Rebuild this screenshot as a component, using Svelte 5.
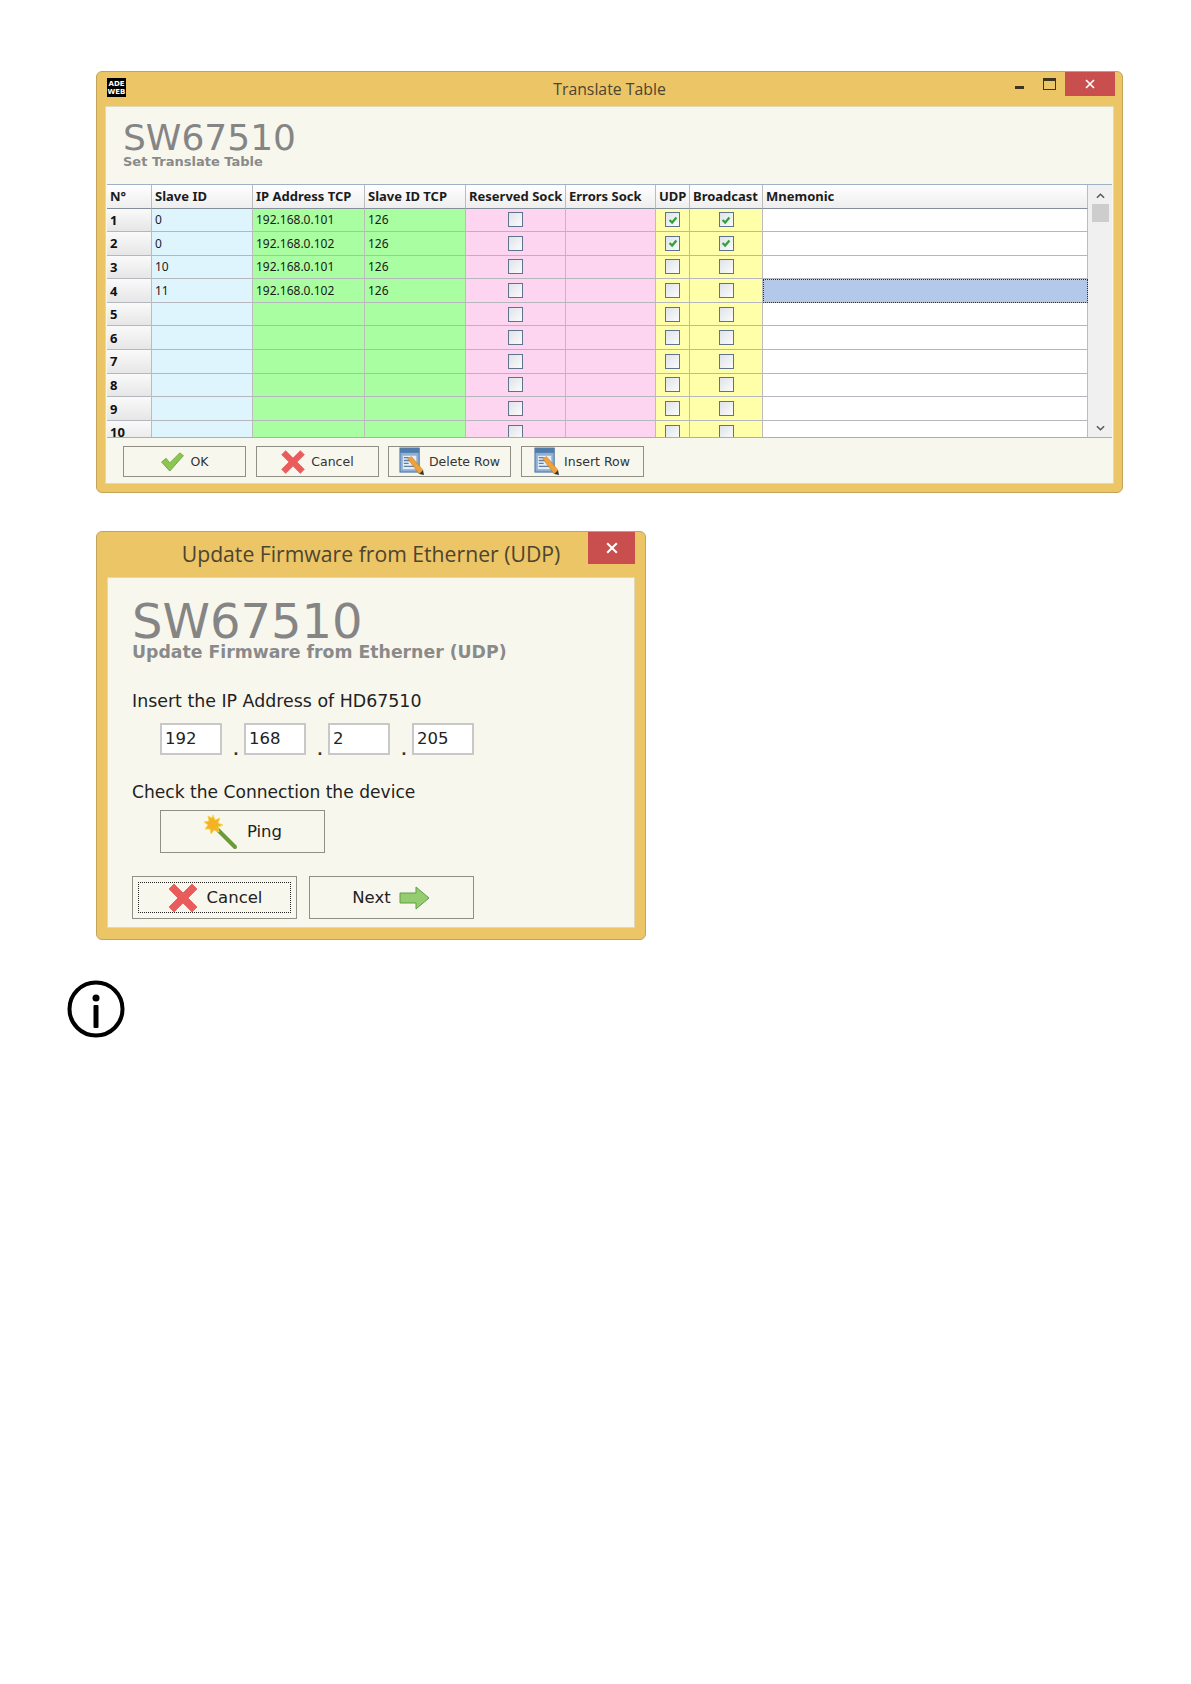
<script>
  const columns = [
    { label: "N°", cls: "num" },
    { label: "Slave ID", cls: "blue" },
    { label: "IP Address TCP", cls: "green" },
    { label: "Slave ID TCP", cls: "green" },
    { label: "Reserved Sock", cls: "pink" },
    { label: "Errors Sock", cls: "pink" },
    { label: "UDP", cls: "yellow" },
    { label: "Broadcast", cls: "yellow" },
    { label: "Mnemonic", cls: "white" },
  ];

  const rows = [
    { slave: "0", ip: "192.168.0.101", tcp: "126", udp: true, broadcast: true },
    { slave: "0", ip: "192.168.0.102", tcp: "126", udp: true, broadcast: true },
    { slave: "10", ip: "192.168.0.101", tcp: "126" },
    { slave: "11", ip: "192.168.0.102", tcp: "126", selected: true },
    {},
    {},
    {},
    {},
    {},
    {},
  ];

  const octets = ["192", "168", "2", "205"];
</script>

{#snippet checkbox(checked)}
  <span class="check">
    {#if checked}
      <svg viewBox="0 0 14 14" width="12" height="12">
        <path d="M3 7l3 3 5-6" fill="none" stroke="#2fa33a" stroke-width="2.6" />
      </svg>
    {/if}
  </span>
{/snippet}

{#snippet redX(size)}
  <svg viewBox="0 0 32 32" width={size} height={size}>
    <path
      d="M7 2l9 9 9-9 5 5-9 9 9 9-5 5-9-9-9 9-5-5 9-9-9-9z"
      fill="#ea5c5c"
      stroke="#e46a66"
      stroke-width="1"
      stroke-linejoin="round"
    />
  </svg>
{/snippet}

{#snippet docPencil()}
  <svg viewBox="0 0 26 30" width="25" height="29">
    <rect x="1" y="1" width="20" height="25" fill="#8fb0d4" stroke="#46709e" />
    <rect x="1" y="1" width="20" height="5" fill="#4f7cab" />
    <rect x="4" y="9" width="14" height="14" fill="#e6edf5" />
    <path d="M5 11h5M5 14h11M5 17h5M5 20h11" stroke="#5b7fa6" stroke-width="1.4" />
    <path d="M9 12l4-2 12 14-4 4z" fill="#efa23c" stroke="#c67a1c" stroke-width="0.6" />
    <path d="M21 28l4-4 1 5z" fill="#333" />
  </svg>
{/snippet}

<main class="page">
  <section class="window wide">
    <header class="titlebar">
      <div class="logo"><span>ADE</span><span>WEB</span></div>
      <div class="title">Translate Table</div>
      <div class="controls">
        <span class="min"></span>
        <span class="max"></span>
        <span class="close">
          <svg viewBox="0 0 10 10" width="10" height="10">
            <path d="M1 1l8 8M9 1l-8 8" stroke="#fff" stroke-width="1.7" />
          </svg>
        </span>
      </div>
    </header>

    <div class="body">
      <div class="brand">
        <div class="code">SW67510</div>
        <div class="sub">Set Translate Table</div>
      </div>

      <div class="table-wrap">
        <div class="table">
          <div class="row head">
            {#each columns as col}
              <div class="cell">{col.label}</div>
            {/each}
          </div>
          {#each rows as row, i}
            <div class="row">
              <div class="cell num">{i + 1}</div>
              <div class="cell blue">{row.slave ?? ""}</div>
              <div class="cell green">{row.ip ?? ""}</div>
              <div class="cell green">{row.tcp ?? ""}</div>
              <div class="cell pink center">{@render checkbox(false)}</div>
              <div class="cell pink"></div>
              <div class="cell yellow center">{@render checkbox(row.udp)}</div>
              <div class="cell yellow center">{@render checkbox(row.broadcast)}</div>
              <div class="cell white" class:selected={row.selected}></div>
            </div>
          {/each}
        </div>
        <div class="scrollbar">
          <svg viewBox="0 0 10 6" width="9" height="6">
            <path d="M1 5l4-4 4 4" fill="none" stroke="#555" stroke-width="1.6" />
          </svg>
          <div class="thumb"></div>
          <svg class="down" viewBox="0 0 10 6" width="9" height="6">
            <path d="M1 1l4 4 4-4" fill="none" stroke="#555" stroke-width="1.6" />
          </svg>
        </div>
      </div>

      <div class="actions">
        <button class="btn">
          <svg viewBox="0 0 26 22" width="25" height="20">
            <path
              d="M1 11l5-4 4 5L21 1l4 3L10 21z"
              fill="#8cc552"
              stroke="#6ea53a"
              stroke-linejoin="round"
            />
          </svg>
          OK
        </button>
        <button class="btn">{@render redX(26)} Cancel</button>
        <button class="btn">{@render docPencil()} Delete Row</button>
        <button class="btn">{@render docPencil()} Insert Row</button>
      </div>
    </div>
  </section>

  <section class="window small">
    <header class="titlebar big">
      <div class="title">Update Firmware from Etherner (UDP)</div>
      <span class="close">
        <svg viewBox="0 0 10 10" width="12" height="12">
          <path d="M1 1l8 8M9 1l-8 8" stroke="#fff" stroke-width="1.7" />
        </svg>
      </span>
    </header>

    <div class="body">
      <div class="brand">
        <div class="code">SW67510</div>
        <div class="sub">Update Firmware from Etherner (UDP)</div>
      </div>

      <p class="label first">Insert the IP Address of HD67510</p>
      <div class="ip">
        {#each octets as octet, i}
          {#if i > 0}<span class="dot">.</span>{/if}
          <span class="octet">{octet}</span>
        {/each}
      </div>

      <p class="label second">Check the Connection the device</p>
      <button class="btn large ping">
        <svg viewBox="0 0 36 36" width="36" height="36">
          <path d="M12 13l20 20" stroke="#6c9a3a" stroke-width="4" stroke-linecap="round" />
          <path
            d="M10 1l2 5 5-2-2 5 5 2-5 2 1 5-5-2-3 4-1-5-5 0 3-4-4-3 5-1-1-5 4 2z"
            fill="#f4b326"
            stroke="#f6d548"
            stroke-width="0.8"
          />
        </svg>
        Ping
      </button>

      <div class="nav">
        <button class="btn large focused">
          <span class="focus"></span>
          {@render redX(32)} Cancel
        </button>
        <button class="btn large">
          Next
          <svg viewBox="0 0 32 24" width="32" height="24">
            <path
              d="M1 7h16V1l13 11-13 11v-6H1z"
              fill="#96cc70"
              stroke="#5f9e48"
              stroke-linejoin="round"
            />
          </svg>
        </button>
      </div>
    </div>
  </section>

  <svg class="info" viewBox="0 0 58 58" width="58" height="58">
    <circle cx="29" cy="29" r="26.5" fill="none" stroke="#000" stroke-width="4" />
    <circle cx="29" cy="18" r="3.5" fill="#000" />
    <rect x="26.5" y="25" width="5" height="23" rx="1" fill="#000" />
  </svg>
</main>

<style>
  :global(body) {
    background: #fff;
  }

  .page {
    height: 1684px;
    padding: 71px 0 0 96px;
    box-sizing: border-box;
    display: flex;
    flex-direction: column;
    align-items: flex-start;
    font-family: "DejaVu Sans", sans-serif;
  }

  .window {
    box-sizing: border-box;
    background: #ecc566;
    border: 1px solid #c4a45c;
    border-radius: 6px;
    display: flex;
    flex-direction: column;
  }

  .wide {
    width: 1027px;
    height: 422px;
    padding: 0 8px 8px;
  }

  .small {
    width: 550px;
    height: 409px;
    margin-top: 38px;
    padding: 0 10px 11px;
  }

  .titlebar {
    height: 34px;
    flex: none;
    display: flex;
    align-items: center;
    justify-content: center;
    position: relative;
  }

  .titlebar.big {
    height: 45px;
  }

  .title {
    font-family: "Open Sans", sans-serif;
    font-size: 15.8px;
    color: #4d4430;
    margin-bottom: 1px;
  }

  .big .title {
    font-size: 21.2px;
    margin-bottom: 2px;
  }

  .logo {
    position: absolute;
    left: 2px;
    top: 6px;
    width: 19px;
    height: 19px;
    background: #000;
    color: #fff;
    font-size: 7px;
    font-weight: 700;
    line-height: 8px;
    display: flex;
    flex-direction: column;
    align-items: center;
    justify-content: center;
    overflow: hidden;
  }

  .controls {
    position: absolute;
    right: -1px;
    top: 0;
    display: flex;
    align-items: flex-start;
  }

  .min {
    width: 9px;
    height: 3px;
    background: #3d3520;
    margin: 14px 19px 0 0;
  }

  .max {
    width: 11px;
    height: 8px;
    border: 1px solid #3d3520;
    border-top-width: 3px;
    margin: 6px 9px 0 0;
  }

  .close {
    width: 50px;
    height: 24px;
    background: #c94f4f;
    display: flex;
    align-items: center;
    justify-content: center;
  }

  .big .close {
    position: absolute;
    right: 0;
    top: 0;
    width: 47px;
    height: 32px;
  }

  .body {
    flex: 1;
    min-height: 0;
    background: #f8f7ee;
    border: 1px solid #e0d9b5;
    display: flex;
    flex-direction: column;
  }

  .brand {
    color: #858585;
  }

  .code {
    font-size: 36px;
    line-height: 36px;
    padding-top: 13px;
    padding-left: 17px;
  }

  .sub {
    font-size: 13px;
    font-weight: 700;
    line-height: 14px;
    margin-top: -1px;
    padding-left: 17px;
    color: #8a8a8a;
  }

  .table-wrap {
    margin: 15px 1px 0 1px;
    height: 254px;
    flex: none;
    display: flex;
    border-top: 1px solid #9fb2c4;
    border-bottom: 1px solid #9fb2c4;
    box-sizing: border-box;
  }

  .table {
    width: 981px;
    overflow: hidden;
    font-family: "Noto Sans", sans-serif;
  }

  .row {
    display: grid;
    grid-template-columns: 45px 101px 112px 101px 100px 90px 34px 73px 325px;
    height: 23.6px;
  }

  .cell {
    box-sizing: border-box;
    border-right: 1px solid #bcbcbc;
    border-bottom: 1px solid #b4b8bc;
    padding-left: 3px;
    font-size: 12px;
    color: #1a1a1a;
    display: flex;
    align-items: center;
    overflow: hidden;
    white-space: nowrap;
  }

  .head {
    height: 23.5px;
  }

  .head .cell {
    background: linear-gradient(#fff, #eee);
    border-bottom-color: #858f99;
    font-size: 13px;
    font-weight: 700;
    color: #1c1c1c;
  }

  .cell.num {
    background: linear-gradient(#fafafa, #e6e6e6);
    font-size: 13px;
    font-weight: 700;
    color: #111;
  }

  .blue {
    background: #dff5fe;
  }
  .green {
    background: #a9fea1;
  }
  .pink {
    background: #fdd5f1;
  }
  .yellow {
    background: #ffffaa;
  }
  .white {
    background: #fff;
  }

  .center {
    justify-content: center;
    padding-left: 0;
  }

  .cell.selected {
    background: #b4c8e9;
    outline: 1px dotted #333;
    outline-offset: -1px;
  }

  .check {
    box-sizing: border-box;
    width: 15px;
    height: 15px;
    flex: none;
    border: 1.5px solid #5f748c;
    background: linear-gradient(135deg, #dfe3e8, #fbfbfb);
    display: flex;
    align-items: center;
    justify-content: center;
  }

  .scrollbar {
    width: 24px;
    background: #f0f0f0;
    display: flex;
    flex-direction: column;
    align-items: center;
    padding-top: 8px;
    box-sizing: border-box;
  }

  .thumb {
    width: 17px;
    height: 18px;
    margin-top: 5px;
    background: #cdcdcd;
  }

  .down {
    margin-top: auto;
    margin-bottom: 6px;
  }

  .actions {
    display: flex;
    gap: 9.5px;
    padding: 8px 0 0 17px;
  }

  .btn {
    box-sizing: border-box;
    width: 123px;
    height: 31px;
    padding: 0;
    background: #f8f7ee;
    border: 1px solid #8f8f85;
    font-family: "DejaVu Sans", sans-serif;
    font-size: 12.5px;
    color: #333;
    display: flex;
    align-items: center;
    justify-content: center;
    gap: 5px;
    position: relative;
  }

  .small .brand .code {
    font-size: 48px;
    line-height: 48px;
    padding-top: 19px;
    padding-left: 24px;
  }

  .small .sub {
    font-size: 17.3px;
    line-height: 18px;
    margin-top: -2px;
    padding-left: 24px;
  }

  .label {
    margin: 0;
    padding-left: 24px;
    font-size: 17.4px;
    line-height: 20px;
    color: #222;
  }

  .first {
    margin-top: 29.5px;
  }

  .second {
    margin-top: 27px;
    font-size: 17.1px;
  }

  .ip {
    display: flex;
    padding-left: 52px;
    margin-top: 12.5px;
  }

  .octet {
    box-sizing: border-box;
    width: 62px;
    height: 32px;
    background: #fff;
    border: 2px solid #c8c8c8;
    padding-left: 3px;
    font-size: 16.5px;
    line-height: 28px;
    color: #222;
  }

  .dot {
    box-sizing: border-box;
    width: 22px;
    padding-left: 6px;
    text-align: center;
    font-size: 14px;
    font-weight: 700;
    line-height: 54px;
    height: 32px;
    color: #333;
  }

  .btn.large {
    width: 165px;
    height: 43px;
    font-size: 16.5px;
    color: #222;
    gap: 8px;
  }

  .ping {
    margin: 8px 0 0 52px;
  }

  .nav {
    display: flex;
    gap: 12px;
    padding-left: 24px;
    margin-top: 23px;
  }

  .focus {
    position: absolute;
    inset: 5px;
    border: 1px dotted #222;
  }

  .info {
    margin: 40px 0 0 -29px;
  }
</style>
